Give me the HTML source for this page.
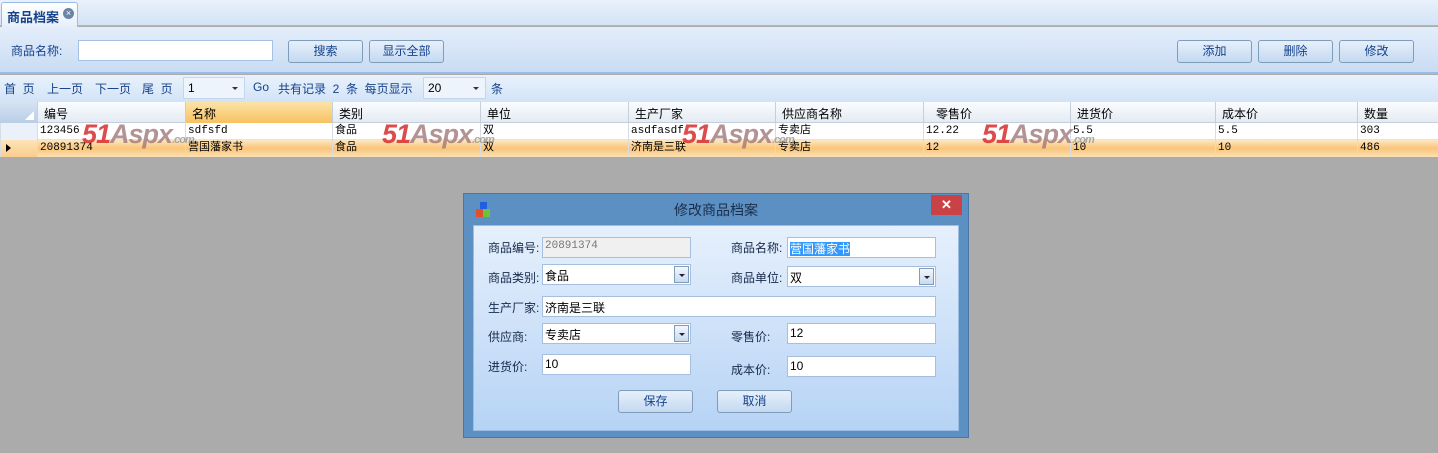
<!DOCTYPE html>
<html><head><meta charset="utf-8">
<style>
*{margin:0;padding:0;box-sizing:border-box}
body{width:1438px;height:453px;overflow:hidden;background:#ababab;font-family:"Liberation Sans","Noto Sans CJK SC","WenQuanYi Zen Hei",sans-serif;font-size:12px;color:#15428b;position:relative}
.a{position:absolute}
.tabbar{left:0;top:0;width:1438px;height:26px;background:linear-gradient(#e9f1fb,#d3e3f6);border-bottom:1px solid #99bbe8}
.tab{left:1px;top:2px;width:77px;height:25px;background:linear-gradient(#fff,#e6eff9);border:1px solid #99bbe8;border-bottom:none;border-radius:3px 3px 0 0;font-weight:bold;font-size:13px;color:#15428b;padding:4px 0 0 5px}
.x{left:63px;top:8px;width:11px;height:11px;border-radius:50%;background:#6b83a6;color:#fff;font-size:9px;line-height:11px;text-align:center}
.tool{left:0;top:27px;width:1438px;height:47px;background:linear-gradient(#e4eefb,#c9dcf3);border-bottom:2px solid #99bbe8}
.btn{height:23px;border:1px solid #7f9db9;border-radius:3px;background:linear-gradient(#e6f0fb,#c4d9f1);text-align:center;line-height:21px;color:#15428b;font-size:12px}
.inp{background:#fff;border:1px solid #a5c1e2}
.pager{left:0;top:75px;width:1438px;height:27px;background:linear-gradient(#e9f2fc,#d2e3f7);color:#15428b;font-size:12px}
.pager span{position:absolute;top:5px}
.sel{background:#eef4fb;border:1px solid #c5d6eb;height:22px;top:2px;font-size:12px;color:#000;padding:3px 0 0 4px}
.sel:after{content:"";position:absolute;right:6px;top:9px;border:3px solid transparent;border-top:3px solid #333}
.hdr{left:0;top:102px;width:1438px;height:21px;background:linear-gradient(#fafcfe,#e4ebf3);border-bottom:1px solid #c5cfdc}
.hc{position:absolute;top:0;height:21px;border-left:1px solid #c5cfdc;padding:3px 0 0 6px;color:#000;font-size:12px}
.row{left:0;width:1438px;height:17px}
.c{position:absolute;top:1px;line-height:15px;font-family:"Liberation Mono","Noto Sans CJK SC",monospace;font-size:11px;color:#000;padding-left:3px}
.cl{position:absolute;top:0;height:17px;border-left:1px solid #d8dde5}
.wm{position:absolute;font-weight:bold;font-style:italic;font-size:27px;letter-spacing:-1px;color:rgba(215,45,45,.85);top:119px;font-family:"Liberation Sans",sans-serif}
.wm b{color:rgba(160,120,120,.8)}
.wm i{font-size:11px;color:rgba(150,150,150,.8);font-style:italic}
.dlg{left:463px;top:193px;width:506px;height:245px;background:#5c8fc2;border:1px solid #4a77a8}
.dt{left:0;top:0;width:504px;height:31px;text-align:center;font-size:14px;color:#1a2e4a;line-height:32px}
.dx{left:467px;top:1px;width:31px;height:20px;background:#c94346;color:#fff;text-align:center;font-size:13px;line-height:20px;font-weight:bold}
.dp{left:9px;top:31px;width:486px;height:206px;background:linear-gradient(#e6f0fc,#b6d3f5);border:1px solid #9bbce3}
.lb{position:absolute;font-size:12px;color:#15294a}
.tb{position:absolute;height:21px;background:#fff;border:1px solid #a6bfdf;font-size:12px;color:#000;padding:2px 0 0 2px}
.dd{position:absolute;right:1px;top:1px;width:15px;height:17px;border:1px solid #7f9db9;background:linear-gradient(#f2f7fd,#c8daf0)}
.dd:after{content:"";position:absolute;left:4px;top:7px;border:3px solid transparent;border-top:3px solid #223}
</style></head><body>
<div class="a tabbar"></div>
<div class="a tab">商品档案</div>
<div class="a x">×</div>

<div class="a tool"></div>
<div class="a" style="left:11px;top:42px;color:#15428b">商品名称:</div>
<div class="a inp" style="left:78px;top:40px;width:195px;height:21px"></div>
<div class="a btn" style="left:288px;top:40px;width:75px">搜索</div>
<div class="a btn" style="left:369px;top:40px;width:75px">显示全部</div>
<div class="a btn" style="left:1177px;top:40px;width:75px">添加</div>
<div class="a btn" style="left:1258px;top:40px;width:75px">删除</div>
<div class="a btn" style="left:1339px;top:40px;width:75px">修改</div>

<div class="a pager">
<span style="left:4px">首&nbsp;&nbsp;页</span>
<span style="left:47px">上一页</span>
<span style="left:95px">下一页</span>
<span style="left:142px">尾&nbsp;&nbsp;页</span>
<div class="a sel" style="left:183px;width:62px">1</div>
<span style="left:253px">Go</span>
<span style="left:278px">共有记录&nbsp;&nbsp;2&nbsp;&nbsp;条&nbsp;&nbsp;每页显示</span>
<div class="a sel" style="left:423px;width:63px">20</div>
<span style="left:491px">条</span>
</div>

<div class="a hdr">
<div class="hc" style="left:0;width:37px;border:none;background:linear-gradient(#d6e3f2,#b9cde6)"><div style="position:absolute;right:3px;bottom:3px;border-left:9px solid transparent;border-bottom:9px solid #fff"></div></div>
<div class="hc" style="left:37px">编号</div>
<div class="hc" style="left:185px;width:147px;background:linear-gradient(#fbe3a8,#f7c260)">名称</div>
<div class="hc" style="left:332px">类别</div>
<div class="hc" style="left:480px">单位</div>
<div class="hc" style="left:628px">生产厂家</div>
<div class="hc" style="left:775px">供应商名称</div>
<div class="hc" style="left:923px;padding-left:12px">零售价</div>
<div class="hc" style="left:1070px">进货价</div>
<div class="hc" style="left:1215px">成本价</div>
<div class="hc" style="left:1357px">数量</div>
</div>

<div class="a row" style="top:123px;background:#fff;border-bottom:1px solid #e0e4ea">
<div class="cl" style="left:0;width:37px;background:#eaf1fa"></div>
<div class="cl" style="left:37px"></div><div class="cl" style="left:185px"></div><div class="cl" style="left:332px"></div><div class="cl" style="left:480px"></div><div class="cl" style="left:628px"></div><div class="cl" style="left:775px"></div><div class="cl" style="left:923px"></div><div class="cl" style="left:1070px"></div><div class="cl" style="left:1215px"></div><div class="cl" style="left:1357px"></div>
<div class="c" style="left:37px">123456</div><div class="c" style="left:185px">sdfsfd</div><div class="c" style="left:332px">食品</div><div class="c" style="left:480px">双</div><div class="c" style="left:628px">asdfasdf</div><div class="c" style="left:775px">专卖店</div><div class="c" style="left:923px">12.22</div><div class="c" style="left:1070px">5.5</div><div class="c" style="left:1215px">5.5</div><div class="c" style="left:1357px">303</div>
</div>
<div class="a row" style="top:140px;background:linear-gradient(#fde7c2,#f9c579 50%,#fde2b5)">
<div class="cl" style="left:0;width:37px;background:linear-gradient(#fde4b8,#f9cd8c)"><div style="position:absolute;left:5px;top:4px;border:4px solid transparent;border-left:5px solid #000"></div></div>
<div class="cl" style="left:37px"></div><div class="cl" style="left:185px"></div><div class="cl" style="left:332px"></div><div class="cl" style="left:480px"></div><div class="cl" style="left:628px"></div><div class="cl" style="left:775px"></div><div class="cl" style="left:923px"></div><div class="cl" style="left:1070px"></div><div class="cl" style="left:1215px"></div><div class="cl" style="left:1357px"></div>
<div class="c" style="left:37px">20891374</div><div class="c" style="left:185px">营国藩家书</div><div class="c" style="left:332px">食品</div><div class="c" style="left:480px">双</div><div class="c" style="left:628px">济南是三联</div><div class="c" style="left:775px">专卖店</div><div class="c" style="left:923px">12</div><div class="c" style="left:1070px">10</div><div class="c" style="left:1215px">10</div><div class="c" style="left:1357px">486</div>
</div>

<div class="wm" style="left:82px">51<b>Aspx</b><i>.com</i></div>
<div class="wm" style="left:382px">51<b>Aspx</b><i>.com</i></div>
<div class="wm" style="left:682px">51<b>Aspx</b><i>.com</i></div>
<div class="wm" style="left:982px">51<b>Aspx</b><i>.com</i></div>

<div class="a dlg">
<div class="a dt">修改商品档案</div>
<div class="a" style="left:16px;top:8px;width:7px;height:8px;background:#1f5fe0"></div>
<div class="a" style="left:12px;top:15px;width:7px;height:8px;background:#e0502a"></div>
<div class="a" style="left:19px;top:15px;width:7px;height:8px;background:#6cc23a"></div>
<div class="a dx">✕</div>
<div class="a dp">
<div class="lb" style="left:14px;top:13px">商品编号:</div>
<div class="tb" style="left:68px;top:11px;width:149px;background:#f0f0f0;color:#777;font-family:'Liberation Mono',monospace;font-size:11px">20891374</div>
<div class="lb" style="left:257px;top:13px">商品名称:</div>
<div class="tb" style="left:313px;top:11px;width:149px"><span style="background:#3399ff;color:#fff">营国藩家书</span></div>
<div class="lb" style="left:14px;top:43px">商品类别:</div>
<div class="tb" style="left:68px;top:38px;width:149px">食品<div class="dd"></div></div>
<div class="lb" style="left:257px;top:43px">商品单位:</div>
<div class="tb" style="left:313px;top:40px;width:149px">双<div class="dd"></div></div>
<div class="lb" style="left:14px;top:73px">生产厂家:</div>
<div class="tb" style="left:68px;top:70px;width:394px">济南是三联</div>
<div class="lb" style="left:14px;top:102px">供应商:</div>
<div class="tb" style="left:68px;top:97px;width:149px">专卖店<div class="dd"></div></div>
<div class="lb" style="left:257px;top:102px">零售价:</div>
<div class="tb" style="left:313px;top:97px;width:149px">12</div>
<div class="lb" style="left:14px;top:132px">进货价:</div>
<div class="tb" style="left:68px;top:128px;width:149px">10</div>
<div class="lb" style="left:257px;top:135px">成本价:</div>
<div class="tb" style="left:313px;top:130px;width:149px">10</div>
<div class="a btn" style="left:144px;top:164px;width:75px">保存</div>
<div class="a btn" style="left:243px;top:164px;width:75px">取消</div>
</div>
</div>
</body></html>
